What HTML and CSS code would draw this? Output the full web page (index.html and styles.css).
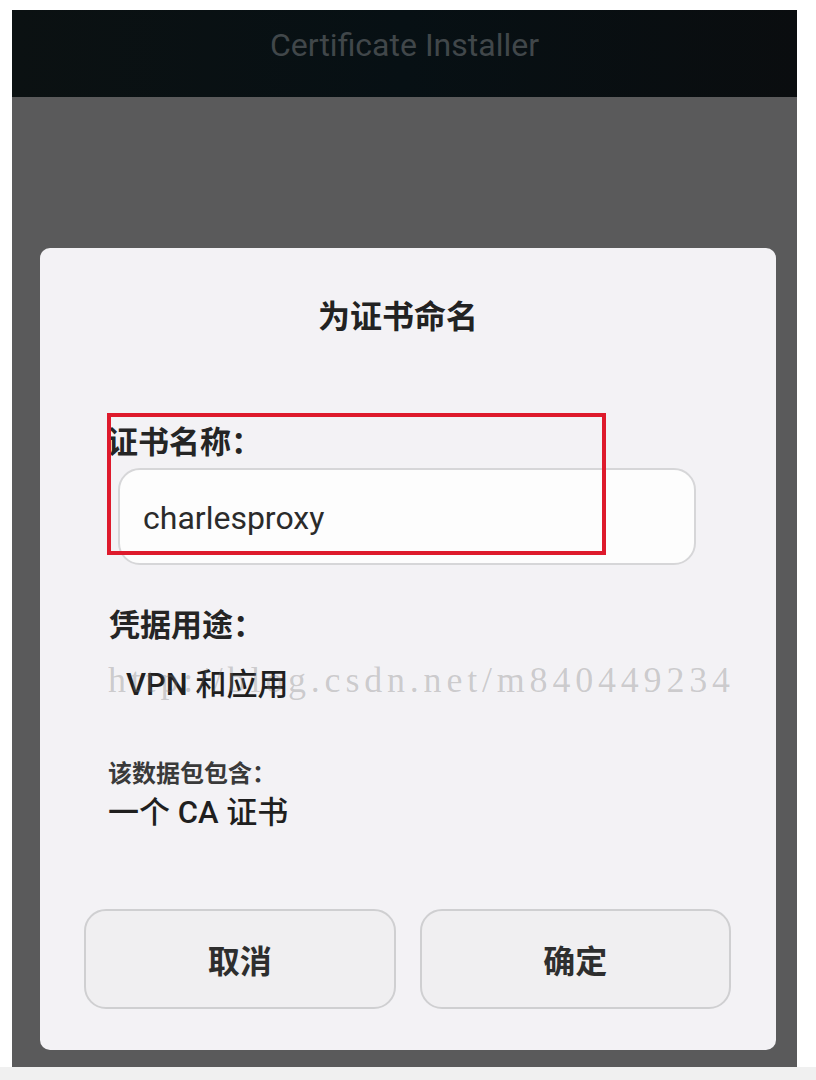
FILE: index.html
```html
<!DOCTYPE html>
<html lang="zh-CN">
<head>
<meta charset="utf-8">
<title>Certificate Installer</title>
<link rel="stylesheet" href="styles.css">
</head>
<body>
<div class="screen">
  <header class="topbar">Certificate Installer</header>
  <main class="scrim">
    <section class="dialog">
      <h1 class="dialog-title">为证书命名</h1>

      <div class="field">
        <label class="label label-first" for="cert-name">证书名称：</label>
        <div class="input" id="cert-name">charlesproxy</div>
        <div class="highlight"></div>
      </div>

      <div class="label label-usage">凭据用途：</div>
      <div class="value value-usage">VPN 和应用</div>

      <div class="small-label">该数据包包含：</div>
      <div class="value value-contents">一个 CA 证书</div>

      <div class="actions">
        <button class="btn">取消</button>
        <button class="btn">确定</button>
      </div>

      <div class="watermark">http://blog.csdn.net/m840449234</div>
    </section>
  </main>
</div>
<div class="bottom-strip"></div>
</body>
</html>
```

FILE: styles.css
```css
* {
  box-sizing: border-box;
}

html, body {
  margin: 0;
  padding: 0;
  background: #ffffff;
}

body {
  font-family: "Noto Sans CJK SC", "Noto Sans", sans-serif;
  color: #222;
}

.screen {
  margin: 10px 0 0 12px;
  width: 785px;
  height: 1057px;
  display: flex;
  flex-direction: column;
  background: #5b5b5c;
}

.topbar {
  height: 87px;
  flex: none;
  background: linear-gradient(90deg, #0b1112 0%, #071014 50%, #0a0d0f 100%);
  color: #41474a;
  font-family: Roboto, "Liberation Sans", sans-serif;
  font-size: 32px;
  line-height: 70px;
  text-align: center;
}

.scrim {
  flex: 1;
  background: #5a5a5b;
  padding: 151px 21px 17px 28px;
  display: flex;
}

.dialog {
  position: relative;
  flex: 1;
  background: #f3f2f5;
  border-radius: 10px;
  padding: 46px 0 41px;
  display: flex;
  flex-direction: column;
}

.dialog-title {
  margin: 0;
  padding-right: 20px;
  font-size: 32px;
  line-height: 40px;
  font-weight: 700;
  text-align: center;
  color: #222;
}

.field {
  position: relative;
  margin-top: 88px;
  display: flex;
  flex-direction: column;
}

.label {
  display: block;
  font-size: 31px;
  line-height: 36px;
  font-weight: 700;
  color: #252525;
  padding-left: 69px;
}

.label-first {
  padding-left: 67px;
}

.input {
  margin: 10px 0 0 78px;
  width: 578px;
  height: 97px;
  background: #fdfdfd;
  border: 2px solid #d6d6d8;
  border-radius: 22px;
  padding: 4px 0 0 23px;
  font-family: Roboto, "Noto Sans", sans-serif;
  font-size: 32px;
  line-height: 89px;
  color: #2b2b2b;
}

.highlight {
  position: absolute;
  left: 67px;
  top: -9px;
  width: 499px;
  height: 142px;
  border: 4px solid #de1a2c;
}

.label-usage {
  margin-top: 40px;
}

.value {
  font-family: Roboto, "Noto Sans CJK SC", sans-serif;
  font-size: 31px;
  line-height: 36px;
  font-weight: 500;
  color: #1f1f1f;
  padding-left: 68px;
}

.value-usage {
  margin-top: 26px;
  padding-left: 86px;
}

.small-label {
  margin-top: 54px;
  font-size: 24px;
  line-height: 30px;
  font-weight: 700;
  color: #3a3a3a;
  padding-left: 68px;
}

.value-contents {
  margin-top: 8px;
}

.actions {
  margin-top: auto;
  display: flex;
  gap: 24px;
  padding: 0 45px 0 44px;
}

.btn {
  flex: 1;
  height: 100px;
  background: #f0eff1;
  border: 2px solid #cfcfd1;
  border-radius: 22px;
  font-family: "Noto Sans CJK SC", sans-serif;
  font-size: 32px;
  font-weight: 700;
  color: #2e2e2e;
}

.watermark {
  position: absolute;
  left: 68px;
  top: 412px;
  font-family: "Liberation Serif", serif;
  font-size: 36px;
  line-height: 40px;
  letter-spacing: 4.8px;
  color: rgba(120, 120, 120, 0.33);
  white-space: nowrap;
  pointer-events: none;
}

.bottom-strip {
  height: 13px;
  background: #f0f0f0;
}
```
